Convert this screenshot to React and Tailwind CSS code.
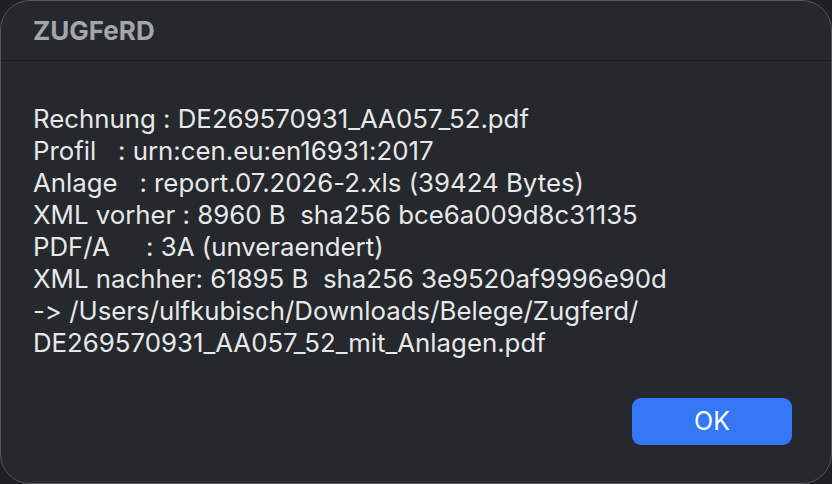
export default function App() {
  const lines = [
    "Rechnung : DE269570931_AA057_52.pdf",
    "Profil   : urn:cen.eu:en16931:2017",
    "Anlage   : report.07.2026-2.xls (39424 Bytes)",
    "XML vorher : 8960 B  sha256 bce6a009d8c31135",
    "PDF/A     : 3A (unveraendert)",
    "XML nachher: 61895 B  sha256 3e9520af9996e90d",
    "-> /Users/ulfkubisch/Downloads/Belege/Zugferd/",
    "DE269570931_AA057_52_mit_Anlagen.pdf",
  ];
  return (
    <div className="w-[832px] h-[484px] bg-[#1e2124] overflow-hidden [font-feature-settings:'calt'_0,'liga'_0]" style={{ fontFamily: "Inter, 'Noto Sans', sans-serif" }}>
      <div className="w-[832px] h-[484px] rounded-[30px] border border-[#54575b] bg-[#25282c] flex flex-col">
        <div className="h-[60px] shrink-0 border-b border-[#1a1c1f] flex items-center pl-[32px]">
          <span className="text-[26px] font-bold text-[#a3a6aa] pb-[1px]">ZUGFeRD</span>
        </div>
        <div className="flex-1 flex flex-col pl-[32px] pt-[42px]">
          {lines.map((l, i) => (
            <div key={i} className="whitespace-pre text-[25.8px] leading-[32px] text-[#e8e8e8]">{l}</div>
          ))}
        </div>
        <div className="flex justify-end pr-[39px] pb-[38px]">
          <button className="w-[160px] h-[47px] rounded-[9px] bg-[#3478f6] text-white text-[25px] flex items-center justify-center">OK</button>
        </div>
      </div>
    </div>
  );
}
